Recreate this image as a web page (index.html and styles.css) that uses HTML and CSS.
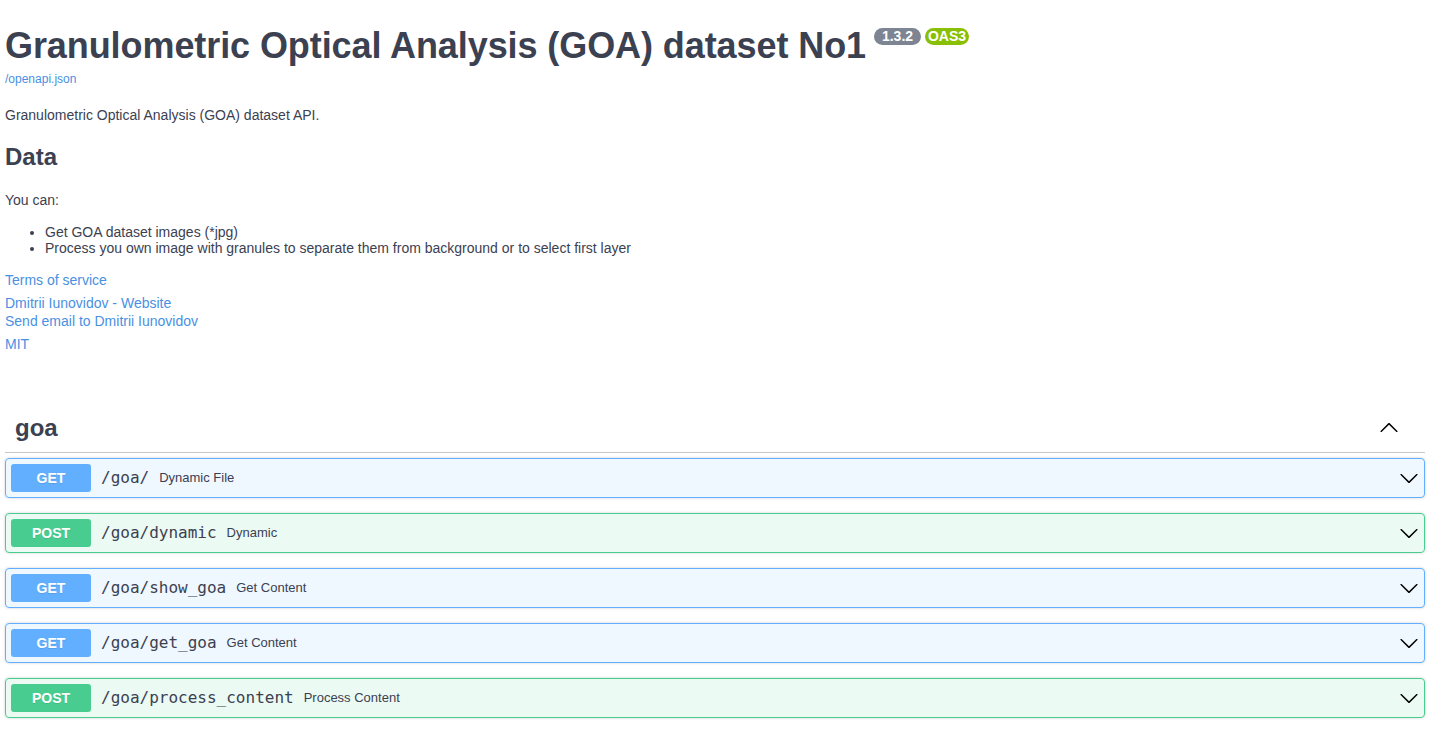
FILE: index.html
```html
<!DOCTYPE html>
<html lang="en">
<head>
<meta charset="utf-8">
<title>Granulometric Optical Analysis (GOA) dataset No1</title>
<link rel="stylesheet" href="styles.css">
</head>
<body>
<div class="page">
  <div class="info">
    <div class="title-row">
      <h2 class="title">Granulometric Optical Analysis (GOA) dataset No1</h2>
      <div class="badges">
        <span class="badge badge-version"> 1.3.2 </span>
        <span class="badge badge-oas">OAS3</span>
      </div>
    </div>
    <a class="spec-link" href="#">/openapi.json</a>
    <p class="desc">Granulometric Optical Analysis (GOA) dataset API.</p>
    <h2 class="section-title">Data</h2>
    <p class="you-can">You can:</p>
    <ul class="features">
      <li>Get GOA dataset images (*jpg)</li>
      <li>Process you own image with granules to separate them from background or to select first layer</li>
    </ul>
    <a class="link link-terms" href="#">Terms of service</a>
    <a class="link link-site" href="#">Dmitrii Iunovidov - Website</a>
    <a class="link link-mail" href="#">Send email to Dmitrii Iunovidov</a>
    <a class="link link-license" href="#">MIT</a>
  </div>

  <div class="tag-section">
    <div class="tag">
      <span class="tag-name">goa</span>
      <svg class="tag-arrow" width="20" height="20" viewBox="0 0 20 20"><path d="M17.418 14.908c.272.268.709.268.979 0s.271-.701 0-.969l-7.908-7.830c-.27-.268-.707-.268-.979 0l-7.908 7.830c-.27.268-.27.701 0 .969.271.268.709.268.979 0L10 7.767l7.418 7.141z"/></svg>
    </div>

    <div class="opblock get">
      <span class="method">GET</span>
      <span class="path">/goa/</span>
      <span class="summary">Dynamic File</span>
      <svg class="arrow" width="20" height="20" viewBox="0 0 20 20"><path d="M17.418 6.109c.272-.268.709-.268.979 0s.271.701 0 .969l-7.908 7.83c-.27.268-.707.268-.979 0l-7.908-7.83c-.27-.268-.27-.701 0-.969.271-.268.709-.268.979 0L10 13.25l7.418-7.141z"/></svg>
    </div>
    <div class="opblock post">
      <span class="method">POST</span>
      <span class="path">/goa/dynamic</span>
      <span class="summary">Dynamic</span>
      <svg class="arrow" width="20" height="20" viewBox="0 0 20 20"><path d="M17.418 6.109c.272-.268.709-.268.979 0s.271.701 0 .969l-7.908 7.83c-.27.268-.707.268-.979 0l-7.908-7.83c-.27-.268-.27-.701 0-.969.271-.268.709-.268.979 0L10 13.25l7.418-7.141z"/></svg>
    </div>
    <div class="opblock get">
      <span class="method">GET</span>
      <span class="path">/goa/show_goa</span>
      <span class="summary">Get Content</span>
      <svg class="arrow" width="20" height="20" viewBox="0 0 20 20"><path d="M17.418 6.109c.272-.268.709-.268.979 0s.271.701 0 .969l-7.908 7.83c-.27.268-.707.268-.979 0l-7.908-7.83c-.27-.268-.27-.701 0-.969.271-.268.709-.268.979 0L10 13.25l7.418-7.141z"/></svg>
    </div>
    <div class="opblock get">
      <span class="method">GET</span>
      <span class="path">/goa/get_goa</span>
      <span class="summary">Get Content</span>
      <svg class="arrow" width="20" height="20" viewBox="0 0 20 20"><path d="M17.418 6.109c.272-.268.709-.268.979 0s.271.701 0 .969l-7.908 7.83c-.27.268-.707.268-.979 0l-7.908-7.83c-.27-.268-.27-.701 0-.969.271-.268.709-.268.979 0L10 13.25l7.418-7.141z"/></svg>
    </div>
    <div class="opblock post">
      <span class="method">POST</span>
      <span class="path">/goa/process_content</span>
      <span class="summary">Process Content</span>
      <svg class="arrow" width="20" height="20" viewBox="0 0 20 20"><path d="M17.418 6.109c.272-.268.709-.268.979 0s.271.701 0 .969l-7.908 7.83c-.27.268-.707.268-.979 0l-7.908-7.83c-.27-.268-.27-.701 0-.969.271-.268.709-.268.979 0L10 13.25l7.418-7.141z"/></svg>
    </div>
  </div>
</div>
</body>
</html>
```

FILE: styles.css
```css
* { box-sizing: border-box; }

html, body {
  margin: 0;
  padding: 0;
  background: #fff;
}

body {
  font-family: "Liberation Sans", Arial, sans-serif;
  color: #3b4151;
}

.page {
  padding: 0 11px 0 5px;
}

.info {
  display: flex;
  flex-direction: column;
  align-items: flex-start;
  padding-top: 25px;
}

.title-row {
  display: flex;
  align-items: flex-start;
}

.title {
  margin: 0;
  font-size: 36px;
  line-height: 41px;
  font-weight: 700;
  letter-spacing: -0.08px;
  color: #3b4151;
}

.badges {
  display: flex;
  gap: 4px;
  margin: 3px 0 0 8px;
}

.badge {
  display: inline-block;
  white-space: pre;
  font-size: 14px;
  line-height: 13px;
  font-weight: 700;
  color: #fff;
  padding: 2px 4px;
  border-radius: 57px;
}

.badge-version { background: #7d8492; }
.badge-oas { background: #89bf04; padding: 2px 3px; }

.spec-link {
  margin-top: 6px;
  font-size: 12px;
  line-height: 14px;
  color: #4990e2;
  text-decoration: none;
}

.desc {
  margin: 21px 0 0;
  font-size: 14px;
  line-height: 16px;
}

.section-title {
  margin: 20px 0 0;
  font-size: 24px;
  line-height: 28px;
  font-weight: 700;
}

.you-can {
  margin: 21px 0 0;
  font-size: 14px;
  line-height: 16px;
}

.features {
  margin: 16px 0 0;
  padding-left: 40px;
  font-size: 14px;
  line-height: 16px;
}

.link {
  font-size: 14px;
  line-height: 16px;
  color: #4990e2;
  text-decoration: none;
}

.link-terms { margin-top: 16px; }
.link-site { margin-top: 7px; }
.link-mail { margin-top: 2px; }
.link-license { margin-top: 7px; }

.tag-section {
  margin-top: 52px;
}

.tag {
  display: flex;
  align-items: center;
  padding: 10px 26px 10px 10px;
  margin-bottom: 5px;
  border-bottom: 1px solid rgba(59, 65, 81, 0.3);
}

.tag-name {
  flex: 1;
  font-size: 24px;
  line-height: 28px;
  font-weight: 700;
}

.tag-arrow { fill: #000; margin-top: -3px; }

.opblock {
  display: flex;
  align-items: center;
  padding: 5px;
  margin-bottom: 15px;
  border: 1px solid;
  border-radius: 4px;
  box-shadow: 0 0 3px rgba(0, 0, 0, 0.19);
}

.opblock.get {
  background: rgba(97, 175, 254, 0.1);
  border-color: #61affe;
}

.opblock.post {
  background: rgba(73, 204, 144, 0.1);
  border-color: #49cc90;
}

.method {
  width: 80px;
  padding: 6px 0;
  font-size: 14px;
  line-height: 16px;
  font-weight: 700;
  text-align: center;
  color: #fff;
  border-radius: 3px;
  text-shadow: 0 1px 0 rgba(0, 0, 0, 0.1);
}

.get .method { background: #61affe; }
.post .method { background: #49cc90; }

.path {
  padding: 0 10px;
  font-family: "DejaVu Sans Mono", monospace;
  font-size: 16px;
  line-height: 20px;
  color: #3b4151;
}

.summary {
  flex: 1;
  font-size: 13px;
  line-height: 16px;
  color: #3b4151;
}

.arrow { fill: #000; flex: none; }
```
